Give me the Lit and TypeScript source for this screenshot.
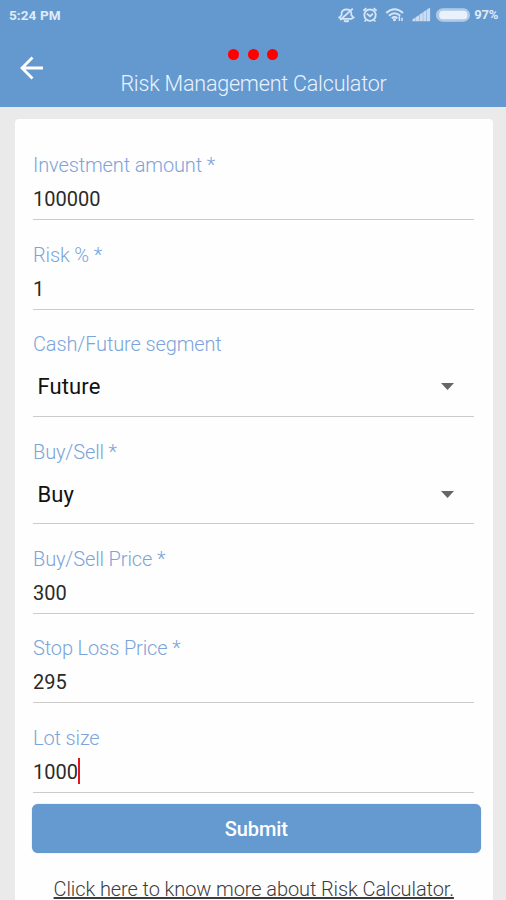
import { LitElement, html, css, svg } from "lit";
import { customElement, property } from "lit/decorators.js";

@customElement("status-bar")
class StatusBar extends LitElement {
  static styles = css`
    :host { display: flex; height: 30px; align-items: center; padding: 0 8px 0 9px; color: #e0ebf8; font: 700 13.5px/30px Roboto, sans-serif; }
    .time { flex: 1; letter-spacing: 0.1px; }
    svg { display: block; flex: none; }
    .pct { margin-left: 1.5px; font-size: 13px; letter-spacing: -0.3px; }
  `;
  render() {
    return html`
      <span class="time">5:24 PM</span>
      <svg width="136" height="20" viewBox="0 0 136 20" fill="none" stroke="#d6e5f6" stroke-width="1.9">
        <path d="M2.2 12.6L4.6 10.2V7.4Q5.6 4.6 9.4 4.3Q13.4 4.6 14.3 7.4V10.2L16.6 12.6L14.4 13.8H4.6ZM3.2 15L15.8 3.6" stroke-width="1.7" />
        <path d="M7 15.6Q9.4 17 11.8 15.6" />
        <circle cx="33" cy="10.2" r="5.7" stroke-width="1.8" />
        <path d="M29.8 8.6L33 11.3L35.9 8.8M26.4 5.8L29.4 3.2M39.6 5.8L36.6 3.2M29 15L27.6 16.5M37 15L38.4 16.5" stroke-width="1.8" />
        <path d="M49.3 8Q57.5 0.6 66 8M52 10.8Q57.5 5.8 63.2 10.8M54.8 13.3Q57.5 10.9 60.4 13.3" stroke-width="2" />
        <circle cx="57.5" cy="14.8" r="1.5" fill="#d6e5f6" stroke="none" />
        <path d="M62.4 16V11.2M65 16V12.7" stroke-width="1.5" />
        ${[0, 1, 2, 3, 4].map((i) => svg`<path d=${`M${75.4 + i * 3.6} 16.2V${14.6 - i * 2.5}L${78.7 + i * 3.6} ${12.3 - i * 2.4}V16.2Z`} fill="#c9dcf2" stroke="none" />`)}
        <rect x="99.5" y="3.8" width="33" height="12.4" rx="6" fill="#abc7e8" stroke="#b6cfec" stroke-width="1" />
        <rect x="102.2" y="5.8" width="28.2" height="8.4" rx="3.5" fill="#e9f1fa" stroke="none" />
      </svg>
      <span class="pct">97%</span>
    `;
  }
}

@customElement("form-field")
class FormField extends LitElement {
  @property() label = "";
  @property() value = "";
  @property({ type: Boolean }) select = false;
  @property({ type: Boolean }) active = false;
  static styles = css`
    :host { display: block; box-sizing: border-box; height: 89.5px; padding-top: 21.7px; border-bottom: 1.5px solid #cbcbcb; font-family: Roboto, sans-serif; }
    :host([select]) { height: 107.4px; }
    .label { height: 26px; font-size: 20px; line-height: 26px; font-weight: 300; color: #7ba4da; letter-spacing: -0.13px; white-space: nowrap; }
    .row { display: flex; align-items: center; height: 30px; margin-top: 6px; font-size: 20px; line-height: 30px; color: #2a2a2a; }
    .row.select { margin-top: 14px; height: 32px; padding: 0 20px 0 4.5px; font-size: 22px; color: #111; justify-content: space-between; letter-spacing: 0.1px; }
    .caret { width: 2.5px; height: 26px; margin-top: -2px; background: #e8131b; }
    svg { display: block; }
  `;
  render() {
    return html`
      <div class="label">${this.label}</div>
      <div class="row ${this.select ? "select" : ""}">
        <span>${this.value}</span>
        ${this.active ? html`<span class="caret"></span>` : ""}
        ${this.select ? html`<svg width="13" height="8" viewBox="0 0 13 8"><path d="M0 0H13L6.5 7Z" fill="#666" /></svg>` : ""}
      </div>
    `;
  }
}

@customElement("app-root")
class AppRoot extends LitElement {
  static styles = css`
    :host { display: flex; flex-direction: column; height: 900px; overflow: hidden; background: #eaeaea; font-family: Roboto, sans-serif; }
    header { flex: none; height: 107px; background: #6499d0; }
    .bar { display: grid; grid-template-columns: 60px 1fr 60px; height: 77px; }
    .back { display: block; margin: 25px 0 0 18.5px; }
    .center { display: flex; flex-direction: column; align-items: center; padding-top: 18.5px; }
    .dots { display: flex; gap: 8.5px; }
    .dot { width: 11px; height: 11px; border-radius: 50%; background: #fe0000; }
    .title { margin: 10px 0 0 1px; font-size: 21.5px; line-height: 28px; font-weight: 300; color: #eaf3fd; white-space: nowrap; letter-spacing: -0.2px; }
    .card { flex: 1; margin: 11.5px 13.5px 0 15px; padding: 12px 12px 0 17px; background: #fefefe; border-radius: 4px 4px 0 0; }
    .fields { padding: 0 6.5px 0 1px; }
    .submit { display: block; width: 100%; height: 49px; margin-top: 11px; padding: 1px 0 0; border: 0; border-radius: 6px; background: #659ad1; box-shadow: 0 0 1px #659ad1; color: #fff; font: 500 20px/48px Roboto, sans-serif; letter-spacing: -0.1px; text-align: center; }
    .more { display: block; margin: 23.5px 5px 0 0; text-align: center; font-size: 20px; line-height: 26px; font-weight: 300; color: #3c3c3c; letter-spacing: -0.1px; text-decoration: underline; white-space: nowrap; }
  `;
  render() {
    return html`
      <header>
        <status-bar></status-bar>
        <div class="bar">
          <svg class="back" width="26" height="26" viewBox="0 0 26 26" fill="none" stroke="#fff" stroke-width="2.8"><path d="M24 13H3.5M13.5 2.5L3 13L13.5 23.5" /></svg>
          <div class="center">
            <div class="dots"><span class="dot"></span><span class="dot"></span><span class="dot"></span></div>
            <div class="title">Risk Management Calculator</div>
          </div>
        </div>
      </header>
      <main class="card">
        <div class="fields">
          <form-field label="Investment amount *" value="100000"></form-field>
          <form-field label="Risk % *" value="1"></form-field>
          <form-field label="Cash/Future segment" value="Future" select></form-field>
          <form-field label="Buy/Sell *" value="Buy" select></form-field>
          <form-field label="Buy/Sell Price *" value="300"></form-field>
          <form-field label="Stop Loss Price *" value="295"></form-field>
          <form-field label="Lot size" value="1000" active></form-field>
        </div>
        <button class="submit">Submit</button>
        <a class="more">Click here to know more about Risk Calculator.</a>
      </main>
    `;
  }
}
